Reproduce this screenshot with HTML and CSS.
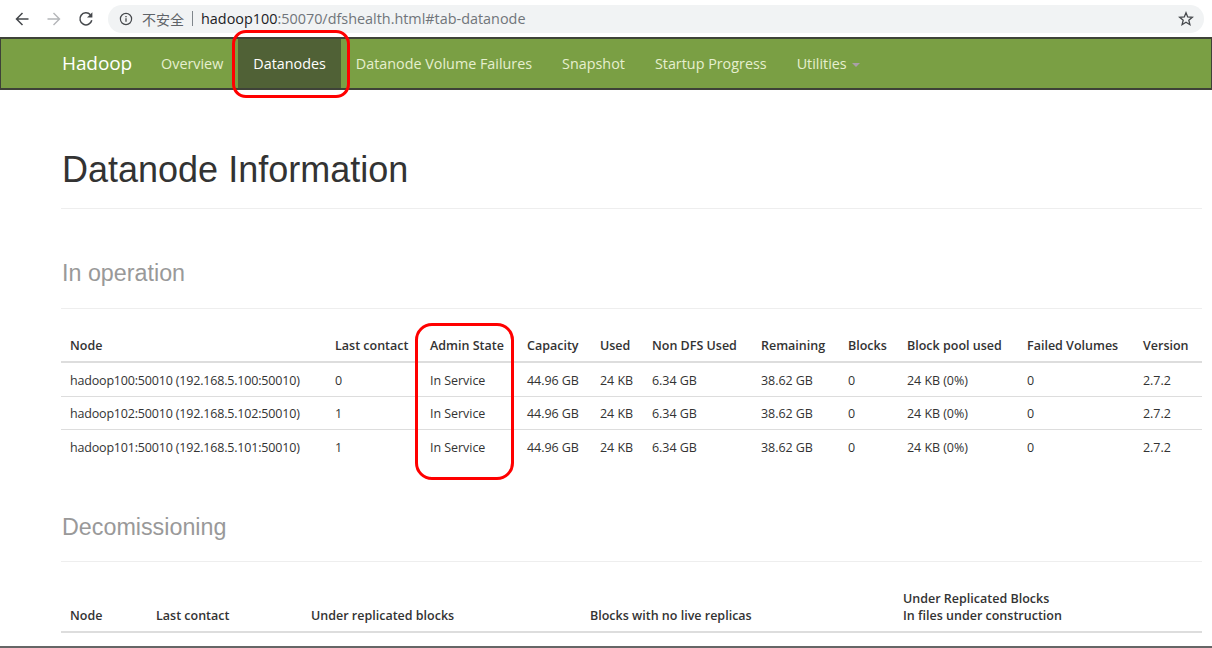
FILE: index.html
```html
<!DOCTYPE html>
<html lang="en">
<head>
<meta charset="utf-8">
<title>Datanode Information</title>
<link rel="stylesheet" href="styles.css">
</head>
<body>
<div class="shot">
  <div class="toolbar">
    <svg class="tb-icon" viewBox="0 0 16 16"><path d="M14.500 8H2.500M8.500 2 2.500 8l6 6" fill="none" stroke="#45484c" stroke-width="1.500"/></svg>
    <svg class="tb-icon" viewBox="0 0 16 16"><path d="M1.500 8h12M7.500 2l6 6-6 6" fill="none" stroke="#b4b6b9" stroke-width="1.400"/></svg>
    <svg class="tb-icon" viewBox="0 0 16 16"><path d="M13.800 9.300A6 6 0 1 1 12.400 3.800" fill="none" stroke="#45484c" stroke-width="1.500"/><path d="M14.400 1.200v5.400H9z" fill="#45484c"/></svg>
    <div class="omnibox">
      <svg class="info" viewBox="0 0 14 14"><circle cx="7" cy="7" r="5.600" fill="none" stroke="#45484c" stroke-width="1.200"/><path d="M7 6.200v3.600M7 4v1.300" stroke="#45484c" stroke-width="1.300"/></svg>
      <span class="insecure">不安全</span>
      <span class="sep"></span>
      <span class="url"><b>hadoop100</b>:50070/dfshealth.html#tab-datanode</span>
      <svg class="star" viewBox="0 0 16 16"><path d="M8 1.800 9.700 6l4.600.3-3.500 2.900 1.100 4.500L8 11.300l-3.900 2.400 1.100-4.500-3.500-2.900L6.300 6z" fill="none" stroke="#45484c" stroke-width="1.300"/></svg>
    </div>
  </div>
  <nav class="navbar">
    <a class="brand">Hadoop</a>
    <a class="nav-link">Overview</a>
    <a class="nav-link active">Datanodes</a>
    <a class="nav-link">Datanode Volume Failures</a>
    <a class="nav-link">Snapshot</a>
    <a class="nav-link">Startup Progress</a>
    <a class="nav-link">Utilities <span class="caret"></span></a>
  </nav>
  <main class="content">
    <div class="page-header"><h1>Datanode Information</h1></div>
    <div class="section-header first"><h2>In operation</h2></div>
    <table class="grid ops">
      <colgroup><col class="c1"><col class="c2"><col class="c3"><col class="c4"><col class="c5"><col class="c6"><col class="c7"><col class="c8"><col class="c9"><col class="c10"><col class="c11"></colgroup>
      <thead><tr><th>Node</th><th>Last contact</th><th>Admin State</th><th>Capacity</th><th>Used</th><th>Non DFS Used</th><th>Remaining</th><th>Blocks</th><th>Block pool used</th><th>Failed Volumes</th><th>Version</th></tr></thead>
      <tbody>
        <tr><td>hadoop100:50010 (192.168.5.100:50010)</td><td>0</td><td>In Service</td><td>44.96 GB</td><td>24 KB</td><td>6.34 GB</td><td>38.62 GB</td><td>0</td><td>24 KB (0%)</td><td>0</td><td>2.7.2</td></tr>
        <tr><td>hadoop102:50010 (192.168.5.102:50010)</td><td>1</td><td>In Service</td><td>44.96 GB</td><td>24 KB</td><td>6.34 GB</td><td>38.62 GB</td><td>0</td><td>24 KB (0%)</td><td>0</td><td>2.7.2</td></tr>
        <tr><td>hadoop101:50010 (192.168.5.101:50010)</td><td>1</td><td>In Service</td><td>44.96 GB</td><td>24 KB</td><td>6.34 GB</td><td>38.62 GB</td><td>0</td><td>24 KB (0%)</td><td>0</td><td>2.7.2</td></tr>
      </tbody>
    </table>
    <div class="section-header second"><h2>Decomissioning</h2></div>
    <table class="grid decom">
      <colgroup><col class="d1"><col class="d2"><col class="d3"><col class="d4"><col class="d5"></colgroup>
      <thead><tr><th>Node</th><th>Last contact</th><th>Under replicated blocks</th><th>Blocks with no live replicas</th><th>Under Replicated Blocks<br>In files under construction</th></tr></thead>
    </table>
  </main>
  <div class="callout callout-nav"></div>
  <div class="callout callout-admin"></div>
  <div class="bottom-edge"></div>
</div>
</body>
</html>
```
FILE: styles.css
```css
* { box-sizing: border-box; }
html, body { margin: 0; background: #fff; }
.shot { position: relative; width: 1212px; height: 648px; overflow: hidden; font-family: "Open Sans", "Noto Sans CJK SC", sans-serif; color: #333; }
.toolbar { height: 37px; display: flex; align-items: center; padding: 0 8px 0 14px; gap: 16px; }
.tb-icon { width: 16px; height: 16px; flex: none; }
.omnibox { flex: 1; height: 28px; margin-left: -2px; background: #f1f3f4; border-radius: 14px; display: flex; align-items: center; padding: 0 10px 0 11px; font-size: 14.4px; }
.info { width: 14px; height: 14px; flex: none; }
.insecure { margin-left: 9px; font-size: 14px; color: #5f6368; }
.sep { width: 1px; height: 15px; background: #80868b; margin: 0 8px; }
.url { color: #70757a; flex: 1; }
.url b { font-weight: 400; color: #202124; }
.star { width: 16px; height: 16px; flex: none; }
.navbar { height: 53px; background: #7a9f44; border: 1px solid #3e4238; border-width: 2px 1px; display: flex; align-items: stretch; padding-left: 61px; font-size: 14.35px; }
.brand { font-size: 19px; color: #fff; padding: 0 14px 0 0; line-height: 49px; letter-spacing: -0.1px; }
.nav-link { color: #e6efcf; padding: 0 15px; line-height: 49px; }
.nav-link.active { background: #506136; color: #fff; }
.caret { display: inline-block; width: 0; height: 0; margin-left: 2px; vertical-align: middle; border-top: 4px solid #a99fa8; border-left: 4px solid transparent; border-right: 4px solid transparent; }
.content { padding: 0 10px 0 61px; }
.page-header { padding-top: 60px; height: 119px; border-bottom: 1px solid #eee; }
h1 { margin: 0 0 0 1px; font: 400 36px/40px "Liberation Sans", Arial, sans-serif; color: #333; }
.section-header { border-bottom: 1px solid #eee; }
.section-header.first { height: 100px; padding-top: 51px; }
.section-header.second { height: 99px; padding-top: 51px; }
h2 { margin: 0 0 0 1px; font: 400 23.3px/26px "Liberation Sans", Arial, sans-serif; color: #999; }
.grid { width: 1141px; border-collapse: collapse; table-layout: fixed; font-size: 12.5px; }
.grid th { text-align: left; font-weight: 600; color: #333; padding: 8px 8px 7px; border-bottom: 2px solid #ddd; vertical-align: bottom; line-height: 17px; }
.grid td { padding: 8.5px 8px 7px; line-height: 17px; border-bottom: 1px solid #ddd; white-space: nowrap; letter-spacing: -0.05px; }
.grid tr:last-child td { border-bottom: 0; }
.grid th:first-child, .grid td:first-child { padding-left: 9px; }
.grid td:first-child { letter-spacing: -0.18px; }
.ops { margin-top: 20px; }
.decom { margin-top: 20px; }
.c1 { width: 266px; } .c2 { width: 95px; } .c3 { width: 97px; } .c4 { width: 73px; } .c5 { width: 52px; } .c6 { width: 109px; } .c7 { width: 87px; } .c8 { width: 59px; } .c9 { width: 120px; } .c10 { width: 116px; } .c11 { width: 67px; }
.d1 { width: 87px; } .d2 { width: 155px; } .d3 { width: 279px; } .d4 { width: 313px; } .d5 { width: 307px; }
.callout { position: absolute; border: 3px solid #f00; border-radius: 14px; }
.callout-nav { left: 232px; top: 30px; width: 118px; height: 68px; }
.callout-admin { left: 415px; top: 323px; width: 99px; height: 157px; border-radius: 17px; }
.bottom-edge { position: absolute; left: 0; right: 0; bottom: 0; height: 2px; background: #666; }
```
